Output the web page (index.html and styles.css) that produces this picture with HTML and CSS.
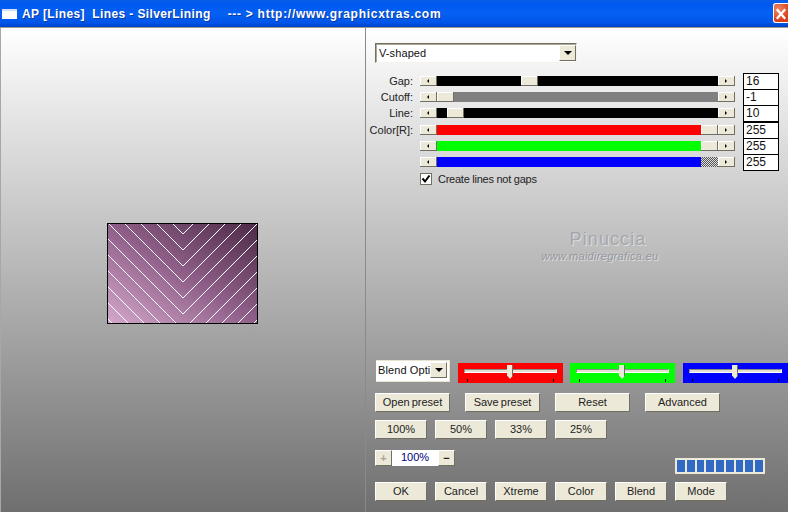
FILE: index.html
```html
<!DOCTYPE html>
<html lang="en">
<head>
<meta charset="utf-8">
<title>AP [Lines] Lines - SilverLining</title>
<link rel="stylesheet" href="styles.css">
</head>
<body>
<div class="window">
  <header class="titlebar">
    <span class="title-icon"></span>
    <span class="title-text">AP [Lines]  Lines - SilverLining</span>
    <span class="title-link">--- &gt; http://www.graphicxtras.com</span>
    <span class="close-btn"><svg width="15" height="20" viewBox="0 0 15 20"><path d="M3 5 L12 15 M12 5 L3 15" stroke="#fff" stroke-width="2.4" fill="none"/></svg></span>
  </header>
  <main class="content">
    <section class="preview-pane">
      <svg class="preview" width="151" height="101" viewBox="0 0 151 101">
        <defs>
          <linearGradient id="grad" x1="0" y1="1" x2="1" y2="0">
            <stop offset="0" stop-color="#d4a8cc"/>
            <stop offset="0.5" stop-color="#8f5f89"/>
            <stop offset="1" stop-color="#4c2a47"/>
          </linearGradient>
          <clipPath id="inner"><rect x="1" y="1" width="149" height="99"/></clipPath>
        </defs>
        <rect x="0.5" y="0.5" width="150" height="100" fill="url(#grad)" stroke="#000"/>
        <g clip-path="url(#inner)" stroke="#fff" fill="none" stroke-width="1" shape-rendering="crispEdges">
          <polyline points="-4,-69 76,11 156,-69"/>
          <polyline points="-4,-53 76,27 156,-53"/>
          <polyline points="-4,-37 76,43 156,-37"/>
          <polyline points="-4,-21 76,59 156,-21"/>
          <polyline points="-4,-5 76,75 156,-5"/>
          <polyline points="-4,11 76,91 156,11"/>
          <polyline points="-4,27 76,107 156,27"/>
          <polyline points="-4,43 76,123 156,43"/>
          <polyline points="-4,59 76,139 156,59"/>
          <polyline points="-4,75 76,155 156,75"/>
          <polyline points="-4,91 76,171 156,91"/>
        </g>
      </svg>
    </section>
    <section class="controls">
      <div class="select main-select"><span class="select-value">V-shaped</span><span class="select-arrow"></span></div>

      <div class="sliders">
        <div class="row">
          <span class="row-label">Gap:</span>
          <div class="scroll"><span class="arrow left"></span><span class="fill black" style="width:84px"></span><span class="thumb"></span><span class="rest black"></span><span class="arrow right"></span></div>
          <span class="value">16</span>
        </div>
        <div class="row">
          <span class="row-label">Cutoff:</span>
          <div class="scroll"><span class="arrow left"></span><span class="thumb"></span><span class="rest grey"></span><span class="arrow right"></span></div>
          <span class="value">-1</span>
        </div>
        <div class="row">
          <span class="row-label">Line:</span>
          <div class="scroll"><span class="arrow left"></span><span class="fill black" style="width:10px"></span><span class="thumb"></span><span class="rest black"></span><span class="arrow right"></span></div>
          <span class="value">10</span>
        </div>
        <div class="row row-shift">
          <span class="row-label">Color[R]:</span>
          <div class="scroll"><span class="arrow left"></span><span class="rest red"></span><span class="thumb"></span><span class="arrow right"></span></div>
          <span class="value">255</span>
        </div>
        <div class="row">
          <span class="row-label"></span>
          <div class="scroll"><span class="arrow left"></span><span class="rest green"></span><span class="thumb"></span><span class="arrow right"></span></div>
          <span class="value">255</span>
        </div>
        <div class="row">
          <span class="row-label"></span>
          <div class="scroll"><span class="arrow left"></span><span class="rest blue"></span><span class="thumb dither"></span><span class="arrow right"></span></div>
          <span class="value">255</span>
        </div>
      </div>

      <label class="check-row">
        <span class="checkbox"><svg width="10" height="10" viewBox="0 0 10 10"><path d="M1.5 4.5 L4 7.5 L8.5 1.5" stroke="#000" stroke-width="2" fill="none"/></svg></span>
        <span>Create lines not gaps</span>
      </label>

      <div class="watermark">
        <div class="wm-name">Pinuccia</div>
        <div class="wm-url">www.maidiregrafica.eu</div>
      </div>

      <div class="blend-row">
        <div class="select blend-select"><span class="select-value">Blend Opti</span><span class="select-arrow"></span></div>
        <div class="channel red"><span class="ch-line"></span><span class="ch-thumb"></span><span class="tick t1"></span><span class="tick t2"></span></div>
        <div class="channel green"><span class="ch-line"></span><span class="ch-thumb"></span><span class="tick t1"></span><span class="tick t2"></span></div>
        <div class="channel blue"><span class="ch-line"></span><span class="ch-thumb"></span><span class="tick t1"></span><span class="tick t2"></span></div>
      </div>

      <div class="btn-row wide">
        <button class="btn">Open preset</button>
        <button class="btn">Save preset</button>
        <button class="btn">Reset</button>
        <button class="btn">Advanced</button>
      </div>
      <div class="btn-row pct">
        <button class="btn">100%</button>
        <button class="btn">50%</button>
        <button class="btn">33%</button>
        <button class="btn">25%</button>
      </div>

      <div class="zoom-row">
        <button class="btn zoom-btn disabled">+</button>
        <span class="zoom-value">100%</span>
        <button class="btn zoom-btn">−</button>
        <div class="progress">
          <i></i><i></i><i></i><i></i><i></i><i></i><i></i><i></i><i></i>
        </div>
      </div>

      <div class="btn-row last">
        <button class="btn">OK</button>
        <button class="btn">Cancel</button>
        <button class="btn">Xtreme</button>
        <button class="btn">Color</button>
        <button class="btn">Blend</button>
        <button class="btn">Mode</button>
      </div>
    </section>
  </main>
</div>
</body>
</html>
```
FILE: styles.css
```css
* { box-sizing: border-box; }
html, body { margin: 0; padding: 0; }
body {
  width: 788px;
  height: 512px;
  overflow: hidden;
  font-family: "Liberation Sans", Arial, sans-serif;
  font-size: 11px;
  color: #111;
}
.window { width: 788px; height: 512px; display: flex; flex-direction: column; overflow: hidden; }

.titlebar {
  height: 27px;
  flex: none;
  display: flex;
  align-items: center;
  background: linear-gradient(#0a5ee6 0, #0058ee 12%, #0560f4 50%, #0055e8 85%, #0040c8 100%);
  position: relative;
}
.title-icon {
  width: 15px;
  height: 10px;
  margin: 0 5px 0 2px;
  background: #fff;
  border-top: 2px solid #cfe0f5;
  flex: none;
}
.title-text, .title-link {
  font-weight: 700;
  font-size: 12px;
  color: #fff;
  white-space: pre;
  text-shadow: 1px 1px 0 #0a3aa0;
}
.title-text { letter-spacing: 0.38px; }
.title-link { letter-spacing: 0.72px; margin-left: 17px; }
.close-btn {
  position: absolute;
  right: 0;
  top: 3px;
  width: 15px;
  height: 20px;
  background: radial-gradient(circle at 30% 30%, #f08a68, #d8401c 70%);
  border: 1px solid #fff;
  border-right: 0;
  border-radius: 3px 0 0 3px;
  display: flex;
}

.content {
  flex: 1;
  display: flex;
  background: linear-gradient(#ffffff, #6f6f6f);
  border-top: 1px solid #9a9a90;
  min-height: 0;
}
.preview-pane {
  width: 366px;
  flex: none;
  border-right: 1px solid #8a8a8a;
  box-shadow: inset 1px 0 0 #a8a89e;
  display: flex;
  justify-content: center;
  align-items: flex-start;
  padding-top: 195px;
}
.preview { display: block; }

.controls {
  flex: 1;
  padding: 15px 0 0 9px;
  display: flex;
  flex-direction: column;
  min-width: 0;
}

.select {
  display: flex;
  align-items: center;
  background: #fff;
  border: 1px solid;
  border-color: #716f64 #f4f3ec #f4f3ec #716f64;
  box-shadow: inset 1px 1px 0 #aca899;
  white-space: nowrap;
  overflow: hidden;
}
.select-value { flex: 1; padding-left: 3px; overflow: hidden; font-size: 11px; line-height: 16px; letter-spacing: 0.1px; }
.select-arrow {
  width: 17px;
  height: 16px;
  flex: none;
  background: #ece9d8;
  border: 1px solid;
  border-color: #fff #716f64 #716f64 #fff;
  position: relative;
}
.select-arrow::after {
  content: "";
  position: absolute;
  left: 4px;
  top: 5px;
  border: 4px solid transparent;
  border-top: 4px solid #000;
  border-bottom: 0;
}
.main-select { width: 202px; height: 20px; }

.sliders { margin-top: 10px; width: 413px; margin-left: -9px; }
.row { display: flex; align-items: center; height: 16px; }
.row-shift { margin-top: 1px; }
.row-label { width: 47px; text-align: right; flex: none; font-size: 11px; line-height: 16px; color: #222; }
.scroll { width: 315px; height: 10px; margin-left: 7px; display: flex; flex: none; }
.arrow, .thumb {
  width: 17px;
  height: 10px;
  flex: none;
  background: #ece9d8;
  border-right: 1px solid #716f64;
  border-bottom: 1px solid #716f64;
  box-shadow: inset 1px 1px 0 #fff;
  position: relative;
}
.arrow::after {
  content: "";
  position: absolute;
  top: 3px;
  left: 7px;
  border: 2px solid transparent;
}
.arrow.left::after { border-right-color: #000; border-left: 0; }
.arrow.right::after { border-left-color: #000; border-right: 0; }
.thumb.dither {
  background: repeating-conic-gradient(#555 0 25%, #ddd 0 50%) 0 0 / 2px 2px;
  box-shadow: none;
  border: 0;
}
.fill { flex: none; display: block; height: 10px; }
.rest { flex: 1; display: block; height: 10px; }
.black { background: #000; }
.grey { background: #808080; }
.red { background: #ff0000; }
.green { background: #00ff00; }
.blue { background: #0000ff; }
.value {
  width: 36px;
  height: 17px;
  margin-left: 8px;
  flex: none;
  background: #fff;
  border: 1px solid #000;
  padding-left: 2px;
  font-size: 12px;
  line-height: 14px;
}

.check-row { display: flex; align-items: center; gap: 6px; margin: 2px 0 0 45px; height: 14px; font-size: 11px; letter-spacing: -0.25px; color: #222; }
.checkbox {
  width: 12px;
  height: 12px;
  background: #fff;
  border: 1px solid #716f64;
  flex: none;
  display: flex;
  align-items: center;
  justify-content: center;
}

.watermark {
  margin-top: 44px;
  margin-left: 166px;
  width: 118px;
  height: 34px;
  text-align: center;
  color: #a4a8ae;
  text-shadow: 1px 1px 0 #dedede;
}
.wm-name { font-size: 18px; line-height: 19px; letter-spacing: 1.1px; padding-left: 16px; white-space: nowrap; }
.wm-url { font-size: 11px; line-height: 14px; font-style: italic; white-space: nowrap; letter-spacing: 0.3px; color: #94989e; }

.blend-row { margin-top: 96px; display: flex; align-items: flex-end; height: 23px; }
.blend-select {
  width: 74px;
  height: 22px;
  margin: 0 8px 0 1px;
  align-self: flex-start;
  border: 0;
  border-top: 1px solid #e6e3d2;
  border-right: 1px solid #e6e3d2;
  border-bottom: 1px solid #e6e3d2;
  box-shadow: none;
  padding-bottom: 2px;
}
.blend-select .select-value { padding-left: 2px; }
.blend-select .select-arrow { height: 16px; margin-right: 2px; }
.channel { width: 105px; height: 20px; margin-right: 7px; position: relative; flex: none; }
.channel.green { margin-right: 8px; }
.channel:last-child { margin-right: 0; }
.ch-line {
  position: absolute;
  left: 6px;
  right: 6px;
  top: 6px;
  height: 4px;
  background: #e2e0d4;
  border-top: 1px solid #8e8c80;
  border-bottom: 1px solid #fff;
  border-left: 1px solid #8e8c80;
  border-right: 1px solid #fff;
}
.ch-thumb {
  position: absolute;
  left: 49px;
  top: 2px;
  width: 6px;
  height: 14px;
  background: #ece9d8;
  border-right: 1px solid #716f64;
  clip-path: polygon(0 0, 100% 0, 100% 75%, 50% 100%, 0 75%);
}
.tick { position: absolute; top: 16px; width: 1px; height: 3px; background: #000; }
.t1 { left: 9px; }
.t2 { left: 95px; }

.btn-row { display: flex; gap: 8px; }
.wide { margin-top: 10px; gap: 15px; }
.wide .btn { width: 75px; word-spacing: -1px; }
.pct { margin-top: 8px; }
.last { margin-top: 0; }
.btn {
  width: 52px;
  height: 19px;
  padding: 0;
  font-family: inherit;
  font-size: 11px;
  line-height: 15px;
  color: #222;
  background: #ece9d8;
  border: 1px solid;
  border-color: #fff #716f64 #716f64 #fff;
  border-radius: 0;
  white-space: nowrap;
}
.zoom-row { margin-top: 11px; display: flex; height: 32px; position: relative; align-items: flex-start; }
.zoom-btn { width: 17px; height: 16px; line-height: 12px; font-weight: 700; }
.zoom-btn.disabled { color: #a8a69a; }
.zoom-value { width: 46px; height: 16px; background: #fff; text-align: center; color: #000080; font-size: 11px; line-height: 15px; }
.progress {
  position: absolute;
  left: 300px;
  top: 8px;
  width: 90px;
  height: 16px;
  background: #ece9d8;
  border: 1px solid #ece9d8;
  padding: 1px;
  display: flex;
  gap: 2px;
}
.progress i { flex: 1; background: #316ac5; }
```
